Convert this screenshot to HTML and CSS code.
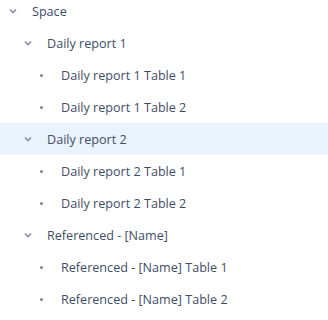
FILE: index.html
```html
<!DOCTYPE html>
<html lang="en">
<head>
  <meta charset="UTF-8">
  <title>Space tree</title>
  <link rel="stylesheet" href="styles.css">
</head>
<body>
  <ul class="tree">
    <li class="row lvl0"><svg class="chev" viewBox="0 0 8 6"><path d="M1 1.5 L4 4.5 L7 1.5"/></svg><span class="label">Space</span></li>
    <li class="row lvl1"><svg class="chev" viewBox="0 0 8 6"><path d="M1 1.5 L4 4.5 L7 1.5"/></svg><span class="label">Daily report 1</span></li>
    <li class="row lvl2"><span class="dot"></span><span class="label">Daily report 1 Table 1</span></li>
    <li class="row lvl2"><span class="dot"></span><span class="label">Daily report 1 Table 2</span></li>
    <li class="row lvl1 selected"><svg class="chev" viewBox="0 0 8 6"><path d="M1 1.5 L4 4.5 L7 1.5"/></svg><span class="label">Daily report 2</span></li>
    <li class="row lvl2"><span class="dot"></span><span class="label">Daily report 2 Table 1</span></li>
    <li class="row lvl2"><span class="dot"></span><span class="label">Daily report 2 Table 2</span></li>
    <li class="row lvl1"><svg class="chev" viewBox="0 0 8 6"><path d="M1 1.5 L4 4.5 L7 1.5"/></svg><span class="label">Referenced - [Name]</span></li>
    <li class="row lvl2"><span class="dot"></span><span class="label">Referenced - [Name] Table 1</span></li>
    <li class="row lvl2"><span class="dot"></span><span class="label">Referenced - [Name] Table 2</span></li>
  </ul>
</body>
</html>
```

FILE: styles.css
```css
body {
  margin: 0;
  background: #fff;
  font-family: "Open Sans", "Noto Sans", sans-serif;
  font-size: 12.6px;
  color: #3f4d68;
}
.tree {
  list-style: none;
  margin: -5px 0 0 0;
  padding: 0;
}
.row {
  display: flex;
  align-items: center;
  height: 32px;
}
.selected {
  background: #e9f2fd;
}
.lvl0 { padding-left: 9px; }
.lvl1 { padding-left: 24px; }
.lvl2 { padding-left: 40px; }
.chev {
  width: 8px;
  height: 6px;
  margin-right: 15px;
  margin-top: -1px;
  fill: none;
  stroke: #8993a4;
  stroke-width: 1.7;
}
.dot {
  width: 3px;
  height: 3px;
  border-radius: 50%;
  background: #7a869a;
  margin: 0 18px 0 0;
}
.label {
  white-space: nowrap;
}
```
